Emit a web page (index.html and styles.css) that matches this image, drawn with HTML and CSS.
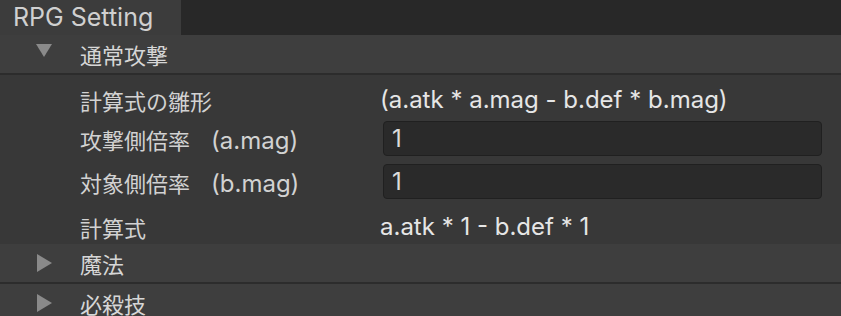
FILE: index.html
```html
<!DOCTYPE html>
<html lang="ja">
<head>
<meta charset="utf-8">
<link rel="stylesheet" href="styles.css">
</head>
<body>
<div class="window">
  <div class="tabbar">
    <div class="tab">RPG Setting</div>
  </div>
  <div class="foldout open">
    <div class="fold-header">
      <span class="arrow down"></span>
      <span class="fold-title">通常攻撃</span>
    </div>
    <div class="fold-body">
      <div class="row row-first">
        <span class="label">計算式の雛形</span>
        <span class="value">(a.atk * a.mag - b.def * b.mag)</span>
      </div>
      <div class="row row-field">
        <span class="label">攻撃側倍率<span class="lat">(a.mag)</span></span>
        <div class="field">1</div>
      </div>
      <div class="row row-field">
        <span class="label">対象側倍率<span class="lat">(b.mag)</span></span>
        <div class="field">1</div>
      </div>
      <div class="row row-last">
        <span class="label">計算式</span>
        <span class="value">a.atk * 1 - b.def * 1</span>
      </div>
    </div>
  </div>
  <div class="foldout">
    <div class="fold-header">
      <span class="arrow right"></span>
      <span class="fold-title">魔法</span>
    </div>
  </div>
  <div class="foldout">
    <div class="fold-header">
      <span class="arrow right"></span>
      <span class="fold-title">必殺技</span>
    </div>
  </div>
</div>
</body>
</html>
```
FILE: styles.css
```css
* { box-sizing: border-box; }
html, body {
  margin: 0;
  padding: 0;
  background: #383838;
  overflow: hidden;
}
body {
  font-family: Inter, "Noto Sans CJK JP", sans-serif;
  color: #d4d4d4;
}
.window {
  width: 841px;
  height: 316px;
  overflow: hidden;
  background: #383838;
}
.tabbar {
  height: 35px;
  background: #282828;
  display: flex;
}
.tab {
  width: 181px;
  height: 35px;
  background: #3c3c3c;
  padding-left: 13px;
  font-size: 25px;
  line-height: 35px;
  color: #d0d0d0;
}
.fold-header {
  height: 40px;
  background: #3e3e3e;
  border-bottom: 2px solid #2c2c2c;
  display: flex;
  align-items: center;
}
.arrow {
  width: 80px;
  height: 38px;
  position: relative;
  flex: none;
}
.arrow::before {
  content: "";
  position: absolute;
  width: 0;
  height: 0;
}
.arrow.down::before {
  left: 36px;
  top: 9px;
  border-left: 8px solid transparent;
  border-right: 8px solid transparent;
  border-top: 13px solid #8a8a8a;
}
.arrow.right::before {
  left: 37px;
  top: 10px;
  border-top: 9px solid transparent;
  border-bottom: 9px solid transparent;
  border-left: 15px solid #8a8a8a;
}
.fold-title {
  font-size: 22px;
  color: #d6d6d6;
}
.fold-body {
  background: #383838;
}
.row {
  display: flex;
  align-items: center;
  padding-left: 80px;
}
.label {
  width: 300px;
  flex: none;
  font-size: 22px;
  color: #d2d2d2;
  white-space: nowrap;
}
.lat {
  font-size: 24px;
  margin-left: 21px;
}
.value {
  font-size: 24px;
  color: #e6e6e6;
}
.row-first {
  height: 46px;
  padding-top: 3px;
}
.row-field {
  height: 35px;
  margin-bottom: 8px;
}
.row-field + .row-field {
  margin-bottom: 0;
}
.row-last {
  height: 45px;
  padding-top: 10px;
}
.field {
  margin-left: 3px;
  width: 439px;
  height: 35px;
  background: #2a2a2a;
  border: 1px solid #202020;
  border-radius: 4px;
  font-size: 24px;
  line-height: 33px;
  padding-left: 8px;
  color: #dcdcdc;
}
```
